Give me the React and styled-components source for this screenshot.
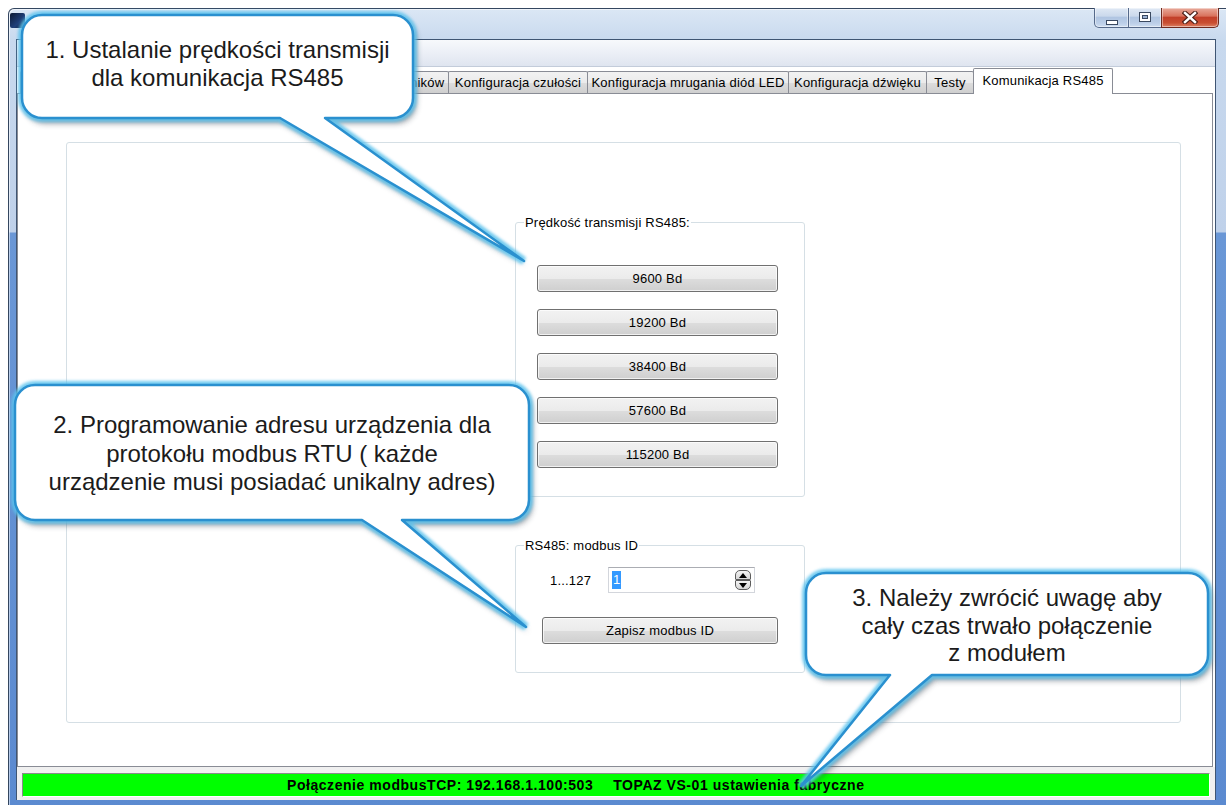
import React from "react";
import styled, { createGlobalStyle } from "styled-components";

const GlobalStyle = createGlobalStyle`
  html, body { margin: 0; padding: 0; background: #fff; }
  body {
    font-family: "Liberation Sans", Arial, sans-serif;
    font-size: 13px;
    color: #000;
    overflow: hidden;
  }
  * { box-sizing: border-box; }
`;

const Page = styled.div`
  position: relative;
  width: 1226px;
  height: 805px;
  overflow: hidden;
  padding: 8px 0 0 8px;
  background: #fff;
`;

/* ---------- window chrome ---------- */

const Window = styled.div`
  width: 1226px;
  height: 800px;
  display: flex;
  flex-direction: column;
  border: 1px solid #34465f;
  border-bottom: none;
  border-radius: 6px 6px 0 0;
  padding: 0 17px 8px 7px;
  background: linear-gradient(
    180deg,
    #dbe7f5 0px,
    #c8d9ee 32px,
    #bfd1ea 223px,
    #6a97d6 224px,
    #5b8ad0 100%
  );
  box-shadow: inset 1px 1px 0 rgba(255, 255, 255, 0.55);
`;

const TitleBar = styled.div`
  height: 30px;
  flex: none;
  display: flex;
  align-items: flex-start;
`;

const AppIcon = styled.div`
  width: 15px;
  height: 15px;
  margin: 4px 0 0 -6px;
  border-radius: 2px;
  background: linear-gradient(135deg, #0d1a33 0%, #1f3f7a 60%, #0b1426 100%);
`;

const Controls = styled.div`
  margin: -1px -3px 0 auto;
  display: flex;
`;

const CtrlButton = styled.div`
  width: ${(p) => p.$w}px;
  height: 20px;
  display: flex;
  align-items: center;
  justify-content: center;
  border: 1px solid ${(p) => (p.$close ? "#6e2a1f" : "#55698a")};
  border-top: none;
  margin-left: -1px;
  border-radius: ${(p) => p.$radius};
  background: ${(p) =>
    p.$close
      ? "linear-gradient(180deg, #e8a99a 0%, #d9735d 42%, #c2402a 50%, #c94e31 78%, #dc8064 100%)"
      : "linear-gradient(180deg, #dfe8f4 0%, #cbd9ec 42%, #b0c5e2 50%, #bccfe8 80%, #cfdef1 100%)"};
  box-shadow: inset 0 0 0 1px rgba(255, 255, 255, 0.45);
`;

const Client = styled.div`
  flex: 1;
  display: flex;
  flex-direction: column;
  border: 1px solid #3f5573;
  border-bottom: none;
  background: #fff;
  min-height: 0;
`;

const TopStrip = styled.div`
  height: 27px;
  flex: none;
  background: linear-gradient(180deg, #f7f9fc 0%, #e9edf5 60%, #dfe5f0 100%);
  border-bottom: 1px solid #c3ccda;
`;

/* ---------- tab control ---------- */

const TabArea = styled.div`
  flex: 1;
  display: flex;
  flex-direction: column;
  padding-right: 2px;
  min-height: 0;
`;

const TabStrip = styled.div`
  height: 26px;
  flex: none;
  display: flex;
  align-items: flex-end;
  padding-left: 3px;
`;

const Tab = styled.div`
  position: relative;
  width: ${(p) => p.$w}px;
  height: ${(p) => (p.$active ? 26 : 22)}px;
  margin-left: -1px;
  margin-bottom: ${(p) => (p.$active ? -1 : 0)}px;
  z-index: ${(p) => (p.$active ? 2 : 1)};
  flex: none;
  border: 1px solid #898c95;
  border-bottom: none;
  border-radius: 2px 2px 0 0;
  background: ${(p) =>
    p.$active
      ? "#fff"
      : "linear-gradient(180deg, #f2f2f2 0%, #ebebeb 50%, #dddddd 51%, #cfcfcf 100%)"};
  display: flex;
  justify-content: center;
  align-items: ${(p) => (p.$active ? "flex-start" : "center")};
  padding-top: ${(p) => (p.$active ? 4 : 0)}px;
  white-space: nowrap;
  overflow: hidden;
  font-size: 13px;
  letter-spacing: 0.2px;
  color: #000;
  &:first-child { margin-left: 0; }
`;

const TabPage = styled.div`
  flex: 1;
  display: flex;
  border: 1px solid #898c95;
  background: #fff;
  padding: 48px 31px 43px 48px;
  min-height: 0;
`;

const Frame = styled.div`
  flex: 1;
  display: flex;
  flex-direction: column;
  align-items: flex-start;
  gap: 41px;
  border: 1px solid #d5dfe5;
  border-radius: 3px;
  padding: 72px 0 0 448px;
`;

const GroupBox = styled.fieldset`
  margin: 0;
  padding: 0;
  width: 290px;
  min-width: 0;
  border: 1px solid #d5dfe5;
  border-radius: 3px;
`;

const GroupTitle = styled.legend`
  margin-left: 8px;
  padding: 0 1px;
  font-size: 13px;
  line-height: 15px;
  letter-spacing: 0.2px;
  color: #000;
`;

const GroupBody = styled.div`
  display: flex;
  flex-direction: column;
  gap: ${(p) => p.$gap}px;
  padding: ${(p) => p.$pad};
`;

const PushButton = styled.button`
  height: 27px;
  width: 100%;
  margin: 0;
  padding: 0;
  border: 1px solid #707070;
  border-radius: 3px;
  background: linear-gradient(180deg, #f2f2f2 0%, #ebebeb 50%, #dddddd 51%, #cfcfcf 100%);
  box-shadow: inset 0 0 0 1px rgba(255, 255, 255, 0.7);
  font-family: "Liberation Sans", Arial, sans-serif;
  font-size: 13px;
  letter-spacing: 0.2px;
  color: #000;
  display: flex;
  align-items: center;
  justify-content: center;
`;

const FieldRow = styled.div`
  display: flex;
  align-items: center;
  gap: 18px;
  margin-left: 8px;
`;

const FieldLabel = styled.span`
  font-size: 13px;
  letter-spacing: 0.2px;
  width: 40px;
`;

const SpinBox = styled.div`
  width: 147px;
  height: 26px;
  display: flex;
  align-items: center;
  padding: 0 2px 0 3px;
  border: 1px solid #d3d6dc;
  border-top-color: #abadb3;
  background: #fff;
`;

const Selected = styled.span`
  background: #3399ff;
  color: #fff;
  font-size: 13px;
  line-height: 18px;
  padding: 0 1px;
`;

const Spinner = styled.div`
  margin-left: auto;
  margin-right: 1px;
  display: flex;
  flex-direction: column;
`;

const SpinArrow = styled.div`
  width: 16px;
  height: 10px;
  display: flex;
  align-items: center;
  justify-content: center;
  border: 1px solid #5c5c5c;
  border-radius: ${(p) => (p.$up ? "5px 5px 1px 1px" : "1px 1px 5px 5px")};
  background: linear-gradient(180deg, #f4f4f4, #d6d6d6);
`;

/* ---------- status bar ---------- */

const StatusArea = styled.div`
  height: 33px;
  flex: none;
  background: #f0f0f0;
  padding: 6px 5px 3px 5px;
`;

const StatusBar = styled.div`
  height: 24px;
  display: flex;
  align-items: center;
  padding-left: 264px;
  background: #00ff00;
  border: 1px solid;
  border-color: #8a8a8a #ffffff #ffffff #8a8a8a;
  font-weight: bold;
  font-size: 14px;
  letter-spacing: 0.55px;
  white-space: nowrap;
  color: #000;
`;

const StatusPart = styled.span`
  margin-left: ${(p) => p.$gap || 0}px;
`;

/* ---------- speech-bubble callouts ---------- */

const Overlay = styled.div`
  position: absolute;
  inset: 0;
  pointer-events: none;
  z-index: 10;
`;

const CalloutBox = styled.div`
  position: absolute;
  left: ${(p) => p.$x}px;
  top: ${(p) => p.$y}px;
  width: ${(p) => p.$w}px;
  height: ${(p) => p.$h}px;
`;

const BubbleSvg = styled.svg`
  position: absolute;
  left: 0;
  top: 0;
  overflow: visible;
`;

const CalloutText = styled.div`
  position: relative;
  height: 100%;
  display: flex;
  flex-direction: column;
  align-items: center;
  justify-content: center;
  padding: ${(p) => p.$pad};
  font-family: "Liberation Sans", Arial, sans-serif;
  font-size: 24px;
  line-height: ${(p) => p.$lh}px;
  color: #1b1b1b;
  text-align: center;
  white-space: nowrap;
`;

function bubblePath(w, h, r, t) {
  return [
    `M${r},0 H${w - r} A${r},${r} 0 0 1 ${w},${r}`,
    `V${h - r} A${r},${r} 0 0 1 ${w - r},${h}`,
    `H${t.b} L${t.tx},${t.ty} L${t.a},${h}`,
    `H${r} A${r},${r} 0 0 1 0,${h - r}`,
    `V${r} A${r},${r} 0 0 1 ${r},0 Z`,
  ].join(" ");
}

function Callout({ id, x, y, w, h, tail, lh, pad, lines }) {
  const d = bubblePath(w, h, 20, tail);
  return (
    <CalloutBox $x={x} $y={y} $w={w} $h={h}>
      <BubbleSvg width={w} height={h}>
        <defs>
          <filter id={`${id}-shade`} x="-20%" y="-20%" width="140%" height="140%">
            <feGaussianBlur stdDeviation="3" />
          </filter>
          <filter id={`${id}-glow`} x="-20%" y="-20%" width="140%" height="140%">
            <feGaussianBlur stdDeviation="1.4" />
          </filter>
        </defs>
        <path d={d} fill="#2b3542" opacity="0.55" transform="translate(3 5)" filter={`url(#${id}-shade)`} />
        <path d={d} fill="none" stroke="#5cc3ee" strokeWidth="8" opacity="0.85" filter={`url(#${id}-glow)`} />
        <path d={d} fill="#fff" stroke="#2a90cf" strokeWidth="2.5" strokeLinejoin="round" />
      </BubbleSvg>
      <CalloutText $lh={lh} $pad={pad}>
        {lines.map((l) => (
          <span key={l}>{l}</span>
        ))}
      </CalloutText>
    </CalloutBox>
  );
}

const callouts = [
  {
    id: "speed",
    x: 22,
    y: 15,
    w: 391,
    h: 103,
    tail: { a: 258, b: 303, tx: 502, ty: 246 },
    lh: 28,
    pad: "0 0 5px 0",
    lines: ["1. Ustalanie prędkości transmisji", "dla komunikacja RS485"],
  },
  {
    id: "address",
    x: 15,
    y: 385,
    w: 514,
    h: 135,
    tail: { a: 347, b: 387, tx: 511, ty: 242 },
    lh: 28.5,
    pad: "3px 0 0 0",
    lines: [
      "2. Programowanie adresu urządzenia dla",
      "protokołu modbus RTU ( każde",
      "urządzenie musi posiadać unikalny adres)",
    ],
  },
  {
    id: "link",
    x: 806,
    y: 573,
    w: 402,
    h: 102,
    tail: { a: 84, b: 126, tx: -5, ty: 213 },
    lh: 27.5,
    pad: "3px 0 0 0",
    lines: ["3. Należy zwrócić uwagę aby", "cały czas trwało połączenie", "z modułem"],
  },
];

const tabs = [
  { label: "Połączenie", w: 91 },
  { label: "Odczyt wartości", w: 113 },
  { label: "Kalibracja", w: 82 },
  { label: "Konfiguracja czujników", w: 146 },
  { label: "Konfiguracja czułości", w: 140 },
  { label: "Konfiguracja mrugania diód LED", w: 202 },
  { label: "Konfiguracja dźwięku", w: 139 },
  { label: "Testy", w: 48 },
  { label: "Komunikacja RS485", w: 140, active: true },
];

const baudRates = ["9600 Bd", "19200 Bd", "38400 Bd", "57600 Bd", "115200 Bd"];

function MinGlyph() {
  return (
    <svg width="12" height="16" viewBox="0 0 12 16">
      <rect x="0.5" y="10.5" width="11" height="4" fill="#fff" stroke="#3a4960" />
    </svg>
  );
}

function MaxGlyph() {
  return (
    <svg width="12" height="11" viewBox="0 0 12 11">
      <rect x="0.5" y="0.5" width="11" height="9" fill="#fff" stroke="#3a4960" />
      <rect x="3.5" y="3.5" width="5" height="3" fill="#9db3d4" stroke="#3a4960" />
    </svg>
  );
}

function CloseGlyph() {
  return (
    <svg width="16" height="13" viewBox="0 0 16 13">
      <path d="M3 2 L13 11 M13 2 L3 11" stroke="#4a1f18" strokeWidth="4.6" strokeLinecap="square" />
      <path d="M3 2 L13 11 M13 2 L3 11" stroke="#fff" strokeWidth="2.4" strokeLinecap="square" />
    </svg>
  );
}

function ArrowGlyph({ up }) {
  return (
    <svg width="8" height="5" viewBox="0 0 8 5">
      <path d={up ? "M0 5 L4 0 L8 5 Z" : "M0 0 L8 0 L4 5 Z"} fill="#000" />
    </svg>
  );
}

export default function App() {
  return (
    <>
      <GlobalStyle />
      <Page>
        <Window>
          <TitleBar>
            <AppIcon />
            <Controls>
              <CtrlButton $w={35} $radius="0 0 0 5px">
                <MinGlyph />
              </CtrlButton>
              <CtrlButton $w={34} $radius="0">
                <MaxGlyph />
              </CtrlButton>
              <CtrlButton $w={58} $radius="0 0 5px 0" $close>
                <CloseGlyph />
              </CtrlButton>
            </Controls>
          </TitleBar>
          <Client>
            <TopStrip />
            <TabArea>
              <TabStrip>
                {tabs.map((t) => (
                  <Tab key={t.label} $w={t.w} $active={t.active}>
                    {t.label}
                  </Tab>
                ))}
              </TabStrip>
              <TabPage>
                <Frame>
                  <GroupBox>
                    <GroupTitle>Prędkość transmisji RS485:</GroupTitle>
                    <GroupBody $gap={17} $pad="35px 26px 28px 21px">
                      {baudRates.map((b) => (
                        <PushButton key={b}>{b}</PushButton>
                      ))}
                    </GroupBody>
                  </GroupBox>
                  <GroupBox>
                    <GroupTitle>RS485: modbus ID</GroupTitle>
                    <GroupBody $gap={24} $pad="14px 26px 28px 26px">
                      <FieldRow>
                        <FieldLabel>1...127</FieldLabel>
                        <SpinBox>
                          <Selected>1</Selected>
                          <Spinner>
                            <SpinArrow $up>
                              <ArrowGlyph up />
                            </SpinArrow>
                            <SpinArrow>
                              <ArrowGlyph />
                            </SpinArrow>
                          </Spinner>
                        </SpinBox>
                      </FieldRow>
                      <PushButton>Zapisz modbus ID</PushButton>
                    </GroupBody>
                  </GroupBox>
                </Frame>
              </TabPage>
            </TabArea>
            <StatusArea>
              <StatusBar>
                <StatusPart>Połączenie modbusTCP: 192.168.1.100:503</StatusPart>
                <StatusPart $gap={20}>TOPAZ VS-01 ustawienia fabryczne</StatusPart>
              </StatusBar>
            </StatusArea>
          </Client>
        </Window>
        <Overlay>
          {callouts.map((c) => (
            <Callout key={c.id} {...c} />
          ))}
        </Overlay>
      </Page>
    </>
  );
}
